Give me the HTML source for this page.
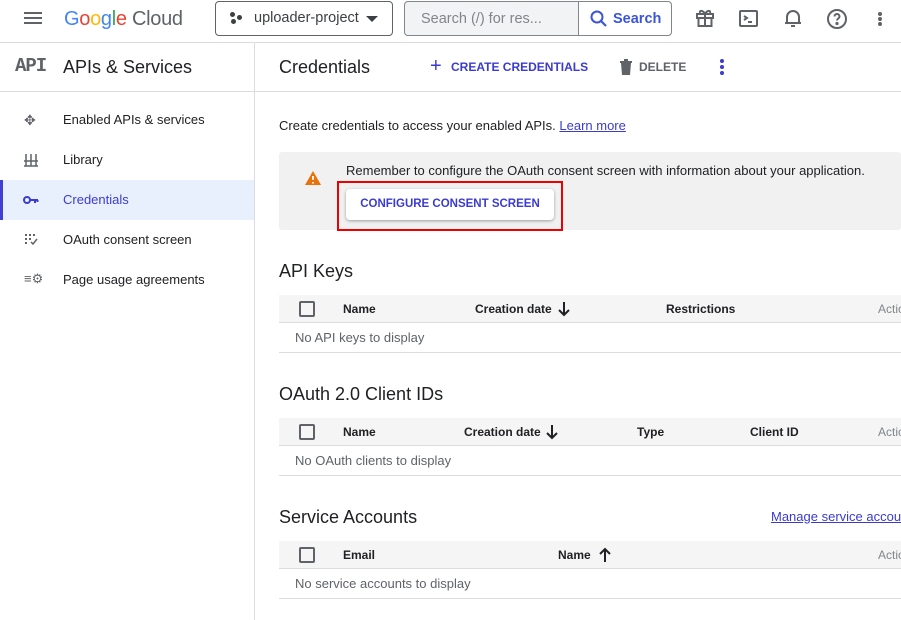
<!DOCTYPE html>
<html><head><meta charset="utf-8"><style>
*{box-sizing:border-box;margin:0;padding:0}
body{width:901px;height:620px;overflow:hidden;background:#fff;font-family:"Liberation Sans",Arial,sans-serif;color:#202124;position:relative}
.a{position:absolute;white-space:nowrap}
.hl{position:absolute;height:1px;background:#dadce0}
.th{position:absolute;left:279px;right:0;height:28px;background:#f5f5f5;border-bottom:1px solid #dadce0}
.th span{position:absolute;top:7px;font-size:12px;font-weight:bold;color:#202124;line-height:14px}
.th svg{position:absolute;top:6px}
.cb{position:absolute;left:20px;top:6px;width:16px;height:16px;border:2px solid #5f6368;border-radius:2px}
.nav{font-size:13px;color:#202124}
</style></head><body>
<div class="a" style="left:24px;top:12px;width:18px;height:2px;background:#5f6368;box-shadow:0 5px 0 #5f6368,0 10px 0 #5f6368"></div>
<div class="a" style="left:64px;top:8px;font-size:20px;letter-spacing:-0.3px"><span style="color:#4285f4">G</span><span style="color:#ea4335">o</span><span style="color:#fbbc04">o</span><span style="color:#4285f4">g</span><span style="color:#34a853">l</span><span style="color:#ea4335">e</span><span style="color:#5f6368"> Cloud</span></div>
<div class="a" style="left:215px;top:1px;width:178px;height:35px;border:1px solid #5f6368;border-radius:4px"></div>
<div class="a" style="left:230px;top:12px;width:5px;height:5px;border-radius:50%;background:#3c4043;box-shadow:7px 3px 0 #3c4043,1px 7px 0 #3c4043"></div>
<div class="a" style="left:254px;top:10px;font-size:14.5px;color:#3c4043">uploader-project</div>
<div class="a" style="left:366px;top:16px;border-left:6px solid transparent;border-right:6px solid transparent;border-top:6px solid #3c4043"></div>
<div class="a" style="left:404px;top:1px;width:268px;height:35px;border:1px solid #80868b;border-radius:4px;background:#f1f3f4"></div>
<div class="a" style="left:578px;top:2px;width:93px;height:33px;background:#fff;border-left:1px solid #80868b;border-radius:0 4px 4px 0"></div>
<div class="a" style="left:421px;top:11px;font-size:14.5px;color:#80868b">Search (/) for res...</div>
<svg class="a" style="left:589px;top:9px" width="20" height="20" viewBox="0 0 20 20"><circle cx="8" cy="8" r="5.5" fill="none" stroke="#3b55d9" stroke-width="2"/><path d="M12 12l5 5" stroke="#3b55d9" stroke-width="2.2"/></svg>
<div class="a" style="left:613px;top:11px;font-size:14.5px;font-weight:bold;color:#3b55d9">Search</div>
<svg class="a" style="left:694px;top:7px" width="22" height="22" viewBox="0 0 22 22" fill="none" stroke="#5f6368" stroke-width="2"><rect x="3" y="7" width="16" height="4"/><rect x="4.5" y="11" width="13" height="8"/><path d="M11 7v12M11 7c-2-4-6-4-5-1M11 7c2-4 6-4 5-1"/></svg>
<svg class="a" style="left:738px;top:8px" width="22" height="22" viewBox="0 0 22 22" fill="none" stroke="#5f6368" stroke-width="2"><rect x="2" y="3" width="17" height="15" rx="1"/><path d="M6 8l3 2-3 2M10 14h4"/></svg>
<svg class="a" style="left:782px;top:7px" width="22" height="22" viewBox="0 0 22 22" fill="none" stroke="#5f6368" stroke-width="2"><path d="M5 16V10a6 6 0 0112 0v6M3 16h16M9 19h4"/></svg>
<svg class="a" style="left:825px;top:7px" width="24" height="24" viewBox="0 0 24 24" fill="none" stroke="#5f6368" stroke-width="2"><circle cx="12" cy="12" r="9"/><path d="M9.5 9.5a2.5 2.5 0 115 0c0 2-2.5 2-2.5 4" /><circle cx="12" cy="16.5" r=".6" fill="#5f6368"/></svg>
<div class="a" style="left:878px;top:12px;width:4px;height:4px;border-radius:50%;background:#5f6368;box-shadow:0 5px 0 #5f6368,0 10px 0 #5f6368"></div>
<div class="hl" style="left:0;right:0;top:42px"></div>
<div class="a" style="left:254px;top:43px;width:1px;height:577px;background:#dadce0"></div>
<div class="a" style="left:15px;top:55px;font-family:'Liberation Mono',monospace;font-weight:bold;font-size:19px;color:#5f6368;letter-spacing:-1px">API</div>
<div class="a" style="left:63px;top:57px;font-size:18px">APIs &amp; Services</div>
<div class="hl" style="left:0;right:0;top:91px"></div>
<div class="a" style="left:0;top:180px;width:254px;height:40px;background:#e8f0fe"></div>
<div class="a" style="left:0;top:180px;width:3px;height:40px;background:#4040d0"></div>
<div class="a" style="left:24px;top:113px;width:14px;height:14px;color:#5f6368;font-size:14px;line-height:14px">✥</div>
<div class="a nav" style="left:63px;top:112px">Enabled APIs &amp; services</div>
<svg class="a" style="left:23px;top:152px" width="16" height="16" viewBox="0 0 16 16" stroke="#5f6368" stroke-width="1.5"><path d="M1 14h14M1 9h14M3 2v12M8 2v12M13 2v12"/></svg>
<div class="a nav" style="left:63px;top:152px">Library</div>
<svg class="a" style="left:23px;top:195px" width="16" height="10" viewBox="0 0 16 10"><circle cx="4" cy="5" r="3" fill="none" stroke="#3b3bd0" stroke-width="2"/><path d="M7 5h8M12 5v3M14.5 5v2" stroke="#3b3bd0" stroke-width="2"/></svg>
<div class="a nav" style="left:63px;top:192px;color:#3b3bd0">Credentials</div>
<svg class="a" style="left:24px;top:233px" width="14" height="12" viewBox="0 0 14 12" fill="#5f6368"><rect x="1" y="1" width="2" height="2"/><rect x="5" y="1" width="2" height="2"/><rect x="9" y="1" width="2" height="2"/><rect x="1" y="5" width="2" height="2"/><rect x="5" y="5" width="2" height="2"/><rect x="1" y="9" width="2" height="2"/><path d="M7 9l2 2 4-5" stroke="#5f6368" fill="none" stroke-width="1.5"/></svg>
<div class="a nav" style="left:63px;top:232px">OAuth consent screen</div>
<div class="a" style="left:24px;top:271px;font-size:13px;color:#5f6368">≡⚙</div>
<div class="a nav" style="left:63px;top:272px">Page usage agreements</div>
<div class="a" style="left:279px;top:57px;font-size:18px">Credentials</div>
<div class="a" style="left:430px;top:55px;font-size:20px;color:#3b3bd0;line-height:22px">+</div>
<div class="a" style="left:451px;top:60px;font-size:12px;font-weight:bold;color:#3b3bd0">CREATE CREDENTIALS</div>
<svg class="a" style="left:619px;top:59px" width="14" height="16" viewBox="0 0 14 16"><path d="M1 2h12v2H1zM5 0h4v2H5zM2 4h10l-1 12H3z" fill="#5f6368"/></svg>
<div class="a" style="left:639px;top:60px;font-size:12px;font-weight:bold;color:#5f6368">DELETE</div>
<div class="a" style="left:720px;top:59px;width:4px;height:4px;border-radius:50%;background:#3b3bd0;box-shadow:0 6px 0 #3b3bd0,0 12px 0 #3b3bd0"></div>
<div class="a" style="left:279px;top:118px;font-size:13px">Create credentials to access your enabled APIs. <span style="color:#3b3bd0;text-decoration:underline">Learn more</span></div>
<div class="a" style="left:279px;top:152px;width:622px;height:78px;background:#f1f1f1;border-radius:3px"></div>
<svg class="a" style="left:305px;top:171px" width="16" height="14" viewBox="0 0 16 14"><path d="M8 0L16 14H0z" fill="#e8710a"/><path d="M8 5v4M8 11v1.5" stroke="#fff" stroke-width="1.8"/></svg>
<div class="a" style="left:346px;top:163px;font-size:13px">Remember to configure the OAuth consent screen with information about your application.</div>
<div class="a" style="left:337px;top:181px;width:226px;height:50px;border:2px solid #e00"></div>
<div class="a" style="left:346px;top:189px;width:208px;height:31px;background:#fff;border-radius:4px;box-shadow:0 1px 3px rgba(0,0,0,.35)"></div>
<div class="a" style="left:346px;top:198px;width:208px;text-align:center;font-size:11.5px;font-weight:bold;color:#3b3bd0">CONFIGURE CONSENT SCREEN</div>

<div class="a" style="left:279px;top:261px;font-size:18px">API Keys</div>
<div class="th" style="top:295px"><div class="cb"></div><span style="left:64px">Name</span><span style="left:196px">Creation date</span><svg style="left:278px" width="14" height="16" viewBox="0 0 14 16"><path d="M7 1v13M2 9l5 5 5-5" stroke="#202124" stroke-width="2" fill="none"/></svg><span style="left:387px">Restrictions</span><span style="left:599px;color:#80868b;font-weight:normal">Actio</span></div>
<div class="a" style="left:295px;top:330px;font-size:13px;color:#5f6368">No API keys to display</div>
<div class="hl" style="left:279px;right:0;top:352px"></div>

<div class="a" style="left:279px;top:384px;font-size:18px">OAuth 2.0 Client IDs</div>
<div class="th" style="top:418px"><div class="cb"></div><span style="left:64px">Name</span><span style="left:185px">Creation date</span><svg style="left:266px" width="14" height="16" viewBox="0 0 14 16"><path d="M7 1v13M2 9l5 5 5-5" stroke="#202124" stroke-width="2" fill="none"/></svg><span style="left:358px">Type</span><span style="left:471px">Client ID</span><span style="left:599px;color:#80868b;font-weight:normal">Actio</span></div>
<div class="a" style="left:295px;top:453px;font-size:13px;color:#5f6368">No OAuth clients to display</div>
<div class="hl" style="left:279px;right:0;top:475px"></div>

<div class="a" style="left:279px;top:507px;font-size:18px">Service Accounts</div>
<div class="a" style="left:771px;top:509px;font-size:13px;color:#3b3bd0;text-decoration:underline">Manage service accounts</div>
<div class="th" style="top:541px"><div class="cb"></div><span style="left:64px">Email</span><span style="left:279px">Name</span><svg style="left:319px" width="14" height="16" viewBox="0 0 14 16"><path d="M7 15V2M2 7l5-5 5 5" stroke="#202124" stroke-width="2" fill="none"/></svg><span style="left:599px;color:#80868b;font-weight:normal">Actio</span></div>
<div class="a" style="left:295px;top:576px;font-size:13px;color:#5f6368">No service accounts to display</div>
<div class="hl" style="left:279px;right:0;top:598px"></div>
</body></html>
